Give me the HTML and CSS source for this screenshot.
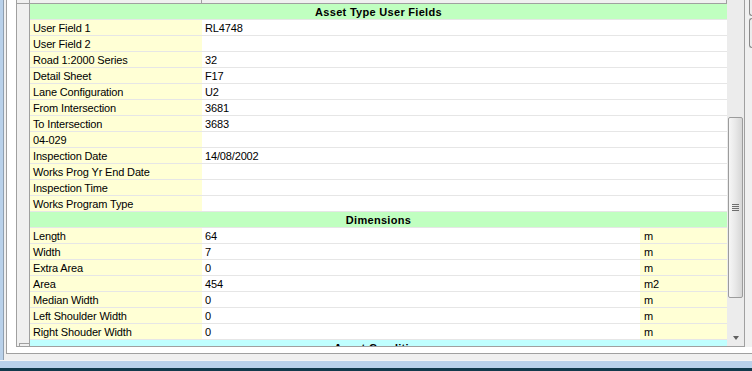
FILE: index.html
```html
<!DOCTYPE html>
<html lang="en">

<head>
    <meta charset="UTF-8">
    <title>Asset Details</title>
    <link rel="stylesheet" href="styles.css">
</head>

<body>
    <div class="window">
        <div class="main">
            <div class="edge"></div>
            <div class="content">
                <div class="panel">
                    <div class="grid">
                        <!-- row header column -->
                        <div class="row-heads">
                            <div class="rh-top"></div>
                            <div class="rh-fill"></div>
                            <div class="rh-cell"></div>
                        </div>

                        <div class="sheet">
                            <div class="col-heads">
                                <div class="ch ch-label"></div>
                                <div class="ch ch-value"></div>
                            </div>
                            <div class="rows">
                                <div class="section green">Asset Type User Fields</div>
                                <div class="row"><div class="label">User Field 1</div><div class="value">RL4748</div></div>
                                <div class="row"><div class="label">User Field 2</div><div class="value"></div></div>
                                <div class="row"><div class="label">Road 1:2000 Series</div><div class="value">32</div></div>
                                <div class="row"><div class="label">Detail Sheet</div><div class="value">F17</div></div>
                                <div class="row"><div class="label">Lane Configuration</div><div class="value">U2</div></div>
                                <div class="row"><div class="label">From Intersection</div><div class="value">3681</div></div>
                                <div class="row"><div class="label">To Intersection</div><div class="value">3683</div></div>
                                <div class="row"><div class="label">04-029</div><div class="value"></div></div>
                                <div class="row"><div class="label">Inspection Date</div><div class="value">14/08/2002</div></div>
                                <div class="row"><div class="label">Works Prog Yr End Date</div><div class="value"></div></div>
                                <div class="row"><div class="label">Inspection Time</div><div class="value"></div></div>
                                <div class="row"><div class="label">Works Program Type</div><div class="value"></div></div>

                                <div class="section green">Dimensions</div>
                                <div class="row"><div class="label">Length</div><div class="value">64</div><div class="unit">m</div></div>
                                <div class="row"><div class="label">Width</div><div class="value">7</div><div class="unit">m</div></div>
                                <div class="row"><div class="label">Extra Area</div><div class="value">0</div><div class="unit">m</div></div>
                                <div class="row"><div class="label">Area</div><div class="value">454</div><div class="unit">m2</div></div>
                                <div class="row"><div class="label">Median Width</div><div class="value">0</div><div class="unit">m</div></div>
                                <div class="row"><div class="label">Left Shoulder Width</div><div class="value">0</div><div class="unit">m</div></div>
                                <div class="row"><div class="label">Right Shouder Width</div><div class="value">0</div><div class="unit">m</div></div>

                                <div class="section cyan">Asset Condition</div>
                            </div>
                        </div>

                        <div class="vscroll">
                            <div class="thumb">
                                <div class="grip"><span></span><span></span><span></span><span></span></div>
                            </div>
                            <div class="track-rest"></div>
                            <div class="arrow-btn"><div class="arrow-down"></div></div>
                        </div>
                    </div>

                    <div class="side">
                        <div class="side-btn first"></div>
                        <div class="side-btn second"></div>
                    </div>
                </div>
                <div class="below"></div>
            </div>
        </div>
        <div class="status"></div>
    </div>
</body>

</html>
```

FILE: styles.css
```css
html, body {
    margin: 0;
    padding: 0;
}

body {
    font-family: "Liberation Sans", Arial, sans-serif;
    font-size: 11px;
    color: #000;
    background-color: #f0f0f0;
    overflow: hidden;
}

.window {
    width: 752px;
    height: 371px;
    display: flex;
    flex-direction: column;
}

.main {
    height: 361px;
    display: flex;
}

/* window frame on the left */
.edge {
    width: 3px;
    background-color: #b9d1ea;
    border-right: 1px solid #8f9fb0;
}

.content {
    flex: 1;
    display: flex;
    flex-direction: column;
    padding-left: 2px;
}

.panel {
    display: flex;
    background-color: #fff;
    border-left: 1px solid #a0a0a0;
    border-bottom: 1px solid #a0a0a0;
    padding: 0 0 6px 9px;
    box-sizing: border-box;
    height: 354px;
}

.below {
    flex: 1;
    background-color: #f0f0f0;
}

.grid {
    width: 729px;
    height: 347px;
    display: flex;
    border: 1px solid #a0a0a0;
    border-top: none;
    box-sizing: border-box;
}

.row-heads {
    width: 12px;
    display: flex;
    flex-direction: column;
    background-color: #f0f0f0;
    border-right: 1px solid #a0a0a0;
}

.rh-top {
    height: 3px;
    border-bottom: 1px solid #a0a0a0;
}

.rh-fill {
    flex: 1;
}

.rh-cell {
    height: 2px;
    margin-left: 2px;
    border-top: 1px solid #a0a0a0;
    border-left: 1px solid #a0a0a0;
}

.sheet {
    width: 697px;
    display: flex;
    flex-direction: column;
    overflow: hidden;
}

.col-heads {
    display: flex;
    height: 3px;
    border-bottom: 1px solid #a0a0a0;
    background-color: #f0f0f0;
    flex-shrink: 0;
}

.ch-label {
    width: 171px;
    border-right: 1px solid #a0a0a0;
}

.ch-value {
    flex: 1;
    border-right: 1px solid #a0a0a0;
}

.rows {
    flex: 1;
    overflow: hidden;
}

.section,
.row {
    height: 15px;
    border-bottom: 1px solid #e6e6e6;
}

.section {
    padding-top: 1px;
    height: 14px;
    line-height: 14px;
    font-weight: bold;
    text-align: center;
    letter-spacing: 0.3px;
}

.green {
    background-color: #c0ffc0;
}

.cyan {
    background-color: #c0ffff;
}

.row {
    display: flex;
}

.label,
.value,
.unit {
    padding-top: 1px;
    line-height: 14px;
    letter-spacing: -0.15px;
    white-space: nowrap;
}

.label {
    width: 172px;
    padding-left: 3px;
    box-sizing: border-box;
    background-color: #ffffd5;
}

.value {
    flex: 1;
    padding-left: 3px;
    background-color: #fff;
}

.unit {
    width: 87px;
    padding-left: 4px;
    box-sizing: border-box;
    background-color: #ffffd5;
}

/* vertical scroll bar */
.vscroll {
    width: 17px;
    display: flex;
    flex-direction: column;
    background-color: #ececec;
    padding-top: 117px;
    box-sizing: border-box;
}

.thumb {
    height: 181px;
    margin: 0 1px;
    border: 1px solid #9c9c9c;
    border-radius: 2px;
    box-sizing: border-box;
    background: linear-gradient(to right, #f6f6f6, #e8e8e8 50%, #d6d6d6);
    display: flex;
    align-items: center;
    justify-content: center;
}

.grip {
    display: flex;
    flex-direction: column;
    gap: 1px;
}

.grip span {
    width: 7px;
    height: 1px;
    background-color: #6e6e6e;
}

.track-rest {
    flex: 1;
}

.arrow-btn {
    height: 17px;
    display: flex;
    align-items: center;
    justify-content: center;
}

.arrow-down {
    width: 0;
    height: 0;
    border-left: 3.5px solid transparent;
    border-right: 3.5px solid transparent;
    border-top: 4px solid #606060;
}

/* clipped buttons at the right edge */
.side {
    flex: 1;
    display: flex;
    flex-direction: column;
    padding-left: 4px;
    background-color: #f0f0f0;
}

.side-btn {
    border: 1px solid #8a8a8a;
    border-right: none;
    border-radius: 3px 0 0 3px;
    background-color: #ececec;
}

.side-btn.first {
    height: 15px;
    border-top: none;
    border-radius: 0 0 0 3px;
}

.side-btn.second {
    height: 28px;
    margin-top: 2px;
}

.status {
    height: 7px;
    background-color: #b9d1ea;
    border-top: 1px solid #f4f4f4;
    border-bottom: 3px solid #123a4c;
}
```
